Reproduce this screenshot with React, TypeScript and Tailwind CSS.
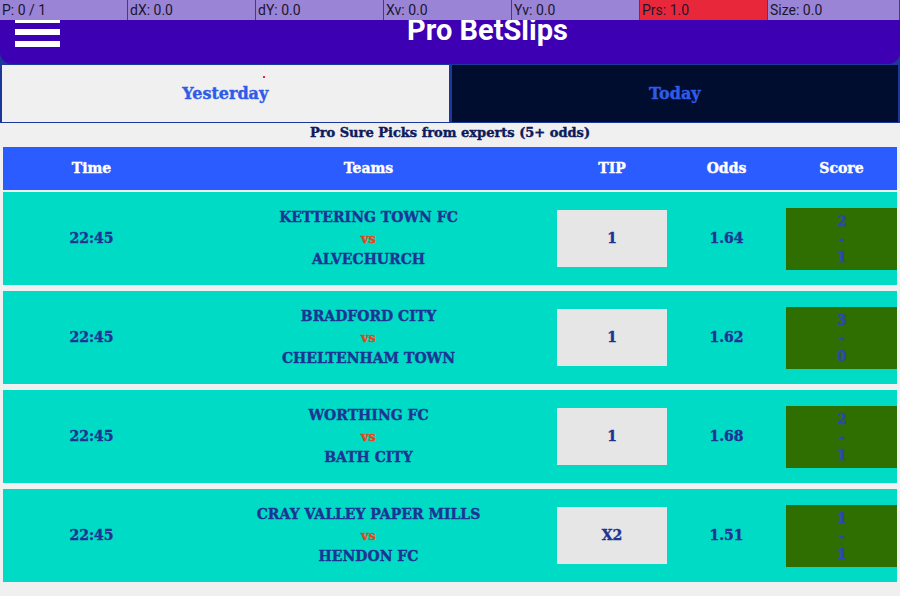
import React from 'react';

interface Match {
  time: string;
  home: string;
  away: string;
  tip: string;
  odds: string;
  score: [string, string];
}

const matches: Match[] = [
  { time: '22:45', home: 'KETTERING TOWN FC', away: 'ALVECHURCH', tip: '1', odds: '1.64', score: ['2', '1'] },
  { time: '22:45', home: 'BRADFORD CITY', away: 'CHELTENHAM TOWN', tip: '1', odds: '1.62', score: ['3', '0'] },
  { time: '22:45', home: 'WORTHING FC', away: 'BATH CITY', tip: '1', odds: '1.68', score: ['2', '1'] },
  { time: '22:45', home: 'CRAY VALLEY PAPER MILLS', away: 'HENDON FC', tip: 'X2', odds: '1.51', score: ['1', '1'] },
];

// heavy slab look: DejaVu Serif bold plus a thin stroke
const slab = "font-['DejaVu_Serif',serif] font-bold [-webkit-text-stroke:0.4px_currentColor]";

const stats = [
  { label: 'P: 0 / 1' },
  { label: 'dX: 0.0' },
  { label: 'dY: 0.0' },
  { label: 'Xv: 0.0' },
  { label: 'Yv: 0.0' },
  { label: 'Prs: 1.0', red: true },
  { label: 'Size: 0.0' },
];

function PointerBar() {
  return (
    <div className="absolute top-0 left-0 right-0 h-5 flex bg-[#9a84d6] font-['Roboto',sans-serif] text-[14px] leading-5 text-[#1c1530] z-10">
      {stats.map((s, i) => (
        <div
          key={s.label}
          className={`${i < 6 ? 'w-[128px]' : 'flex-1'} pl-[2px] border-r border-[#4a3a80] ${s.red ? 'bg-[#e8283a]' : ''}`}
        >
          {s.label}
        </div>
      ))}
    </div>
  );
}

function MatchRow({ m }: { m: Match }) {
  return (
    <div className={`grid grid-cols-[177px_377px_110px_119px_111px] h-[93px] bg-[#00dbc6] items-center text-[#1d3494] text-[14px] ${slab}`}>
      <div className="text-center">{m.time}</div>
      <div className="flex flex-col items-center leading-[21px]">
        <span>{m.home}</span>
        <span className="text-[#e0481a] text-[13px]">vs</span>
        <span>{m.away}</span>
      </div>
      <div className="h-[57px] bg-[#e6e6e6] flex items-center justify-center">{m.tip}</div>
      <div className="text-center">{m.odds}</div>
      <div className="h-[62px] bg-[#2f6e00] flex flex-col items-center justify-center leading-[18px] text-[#2a48b0]">
        <span>{m.score[0]}</span>
        <span>-</span>
        <span>{m.score[1]}</span>
      </div>
    </div>
  );
}

export default function App() {
  return (
    <div className="relative w-[900px] h-[596px] overflow-hidden bg-[#f0f0f0]">
      <PointerBar />

      <div className="bg-[#1a3799]">
        <div className="h-[64px] bg-[#3d00b3] rounded-b-xl flex items-start">
          <div className="w-[75px] pl-[15px] pt-[17px] flex flex-col gap-[6px]">
            <span className="block w-[45px] h-[6px] bg-white" />
            <span className="block w-[45px] h-[6px] bg-white" />
            <span className="block w-[45px] h-[6px] bg-white" />
          </div>
          <div className="flex-1 text-center pt-[13px] font-['Roboto',sans-serif] font-bold text-[29px] leading-[34px] text-white">
            Pro BetSlips
          </div>
        </div>
        <div className="flex gap-[3px] px-[2px] pt-[1px] pb-[1px]">
          <div className={`relative flex-1 h-[57px] bg-[#f0f0f0] flex items-center justify-center text-[#2f5be8] text-[16px] ${slab}`}>
            <span className="absolute left-[261px] top-[11px] w-[2px] h-[2px] bg-[#e8283a]" />
            Yesterday
          </div>
          <div className={`flex-1 h-[57px] bg-[#000d2e] flex items-center justify-center text-[#2f5be8] text-[16px] ${slab}`}>
            Today
          </div>
        </div>
      </div>

      <div className={`text-center text-[#0d1a5c] text-[13px] leading-[18px] pt-[1px] ${slab}`}>
        Pro Sure Picks from experts (5+ odds)
      </div>

      <div className="px-[3px] pt-[5px] flex flex-col gap-[6px]">
        <div className={`grid grid-cols-[177px_377px_110px_119px_111px] h-[43px] -mb-[4px] bg-[#2a5cff] items-center text-white text-[14px] text-center ${slab}`}>
          <div>Time</div>
          <div>Teams</div>
          <div>TIP</div>
          <div>Odds</div>
          <div>Score</div>
        </div>
        {matches.map((m, i) => (
          <MatchRow key={i} m={m} />
        ))}
      </div>
    </div>
  );
}
